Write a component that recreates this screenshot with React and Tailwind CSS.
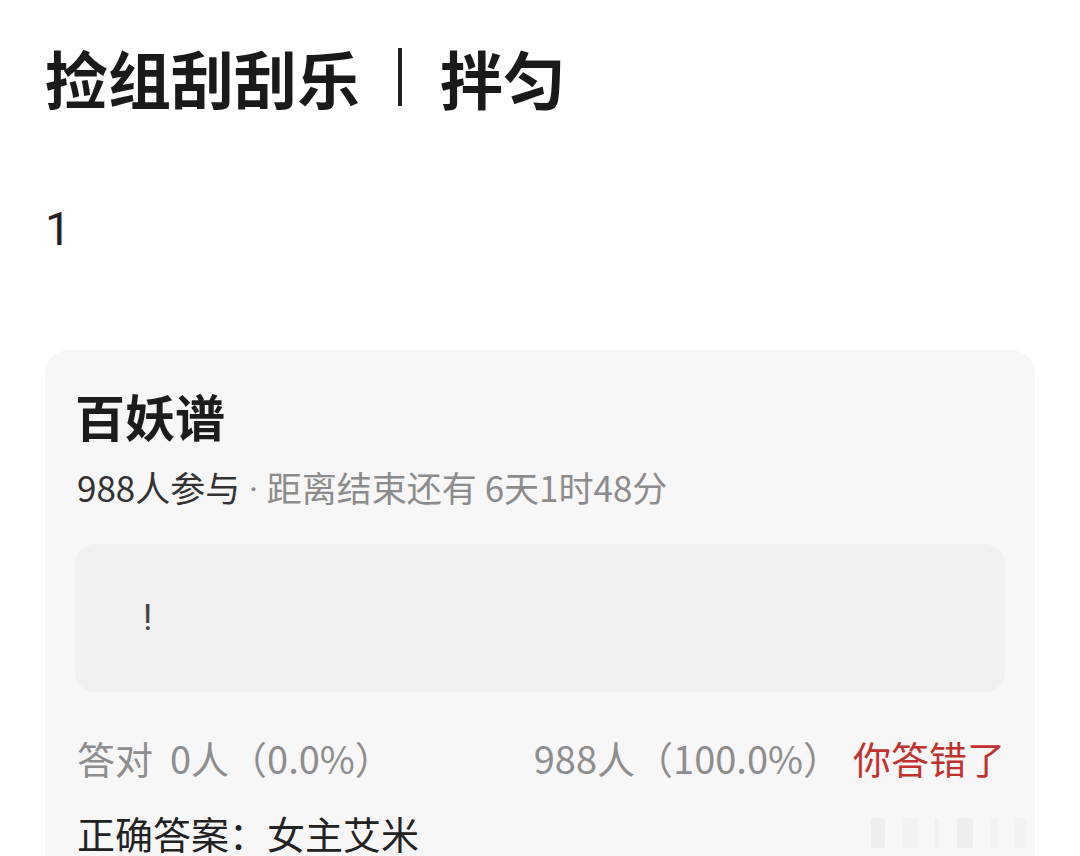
const font = { fontFamily: '"Noto Sans CJK SC", "Noto Sans", sans-serif' };

// faint stroke marks in the lower right corner of the card
const marks = [
  { w: 14, c: 'bg-[#e6e6e6]' },
  { w: 14, c: 'bg-[#eeeeee]' },
  { w: 4, c: 'bg-[#ebebeb]' },
  { w: 16, c: 'bg-[#e6e6e6]' },
  { w: 6, c: 'bg-[#eeeeee]' },
  { w: 12, c: 'bg-[#ededed]' },
];

export default function App() {
  return (
    <div className="min-h-screen bg-white px-[45px] overflow-hidden" style={font}>
      <h1 className="pt-[45px] text-[63px] leading-[64px] font-bold text-[#1a1a1a] flex items-center">
        <span>捡组刮刮乐</span>
        <span className="mx-[38px] inline-block w-[4px] h-[58px] shrink-0 bg-[#222]" />
        <span>拌匀</span>
      </h1>

      <p className="mt-[97px] text-[46px] leading-[46px] font-normal text-[#222]" style={{ fontFamily: 'Roboto, sans-serif' }}>1</p>

      <div className="relative mt-[98px] rounded-[24px] bg-[#f7f7f7] px-[30px] pt-[40px] pb-[40px]">
        <h2 className="text-[50px] leading-[50px] font-bold text-[#1c1c1c]">百妖谱</h2>

        <p className="mt-[27px] pl-[2px] text-[35px] leading-[40px] whitespace-nowrap">
          <span className="text-[#333]">988人参与</span>
          <span className="text-[#8c8c8c]">
            <span style={{ fontFamily: 'Roboto, sans-serif' }}> · </span>距离结束还有 6天1时48分
          </span>
        </p>

        <div className="mt-[33px] h-[148px] rounded-[20px] bg-[#f0f0f0] pl-[68px] flex items-center">
          <span className="text-[36px] leading-[40px] text-[#444]" style={{ fontFamily: 'Roboto, sans-serif' }}>!</span>
        </div>

        <div className="mt-[44px] flex items-center text-[38px] leading-[44px] pl-[2px]">
          <span className="text-[#8e8e8e]">答对&nbsp;&nbsp;0人（0.0%）</span>
          <span className="ml-auto text-[#8e8e8e]">988人（100.0%）</span>
          <span className="ml-[12px] text-[#c1322e]">你答错了</span>
        </div>

        <p className="mt-[32px] pl-[2px] text-[38px] leading-[42px] text-[#222]">正确答案：女主艾米</p>

        <div className="absolute right-[8px] top-[468px] flex items-end gap-[18px] opacity-50">
          {marks.map((m, i) => (
            <span key={i} className={`h-[30px] rounded-[2px] ${m.c}`} style={{ width: m.w }} />
          ))}
        </div>
      </div>
    </div>
  );
}
